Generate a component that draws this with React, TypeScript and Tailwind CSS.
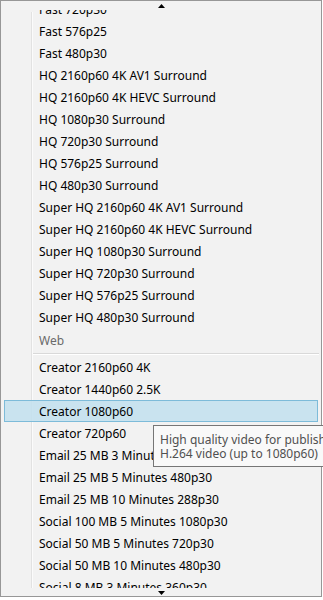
const groupA = [
  'Fast 720p30',
  'Fast 576p25',
  'Fast 480p30',
  'HQ 2160p60 4K AV1 Surround',
  'HQ 2160p60 4K HEVC Surround',
  'HQ 1080p30 Surround',
  'HQ 720p30 Surround',
  'HQ 576p25 Surround',
  'HQ 480p30 Surround',
  'Super HQ 2160p60 4K AV1 Surround',
  'Super HQ 2160p60 4K HEVC Surround',
  'Super HQ 1080p30 Surround',
  'Super HQ 720p30 Surround',
  'Super HQ 576p25 Surround',
  'Super HQ 480p30 Surround',
];

const web = [
  'Creator 2160p60 4K',
  'Creator 1440p60 2.5K',
  'Creator 1080p60',
  'Creator 720p60',
  'Email 25 MB 3 Minutes 1080p30',
  'Email 25 MB 5 Minutes 480p30',
  'Email 25 MB 10 Minutes 288p30',
  'Social 100 MB 5 Minutes 1080p30',
  'Social 50 MB 5 Minutes 720p30',
  'Social 50 MB 10 Minutes 480p30',
  'Social 8 MB 3 Minutes 360p30',
];

function Arrow({ down }: { down?: boolean }) {
  return (
    <svg width="7" height="4" viewBox="0 0 7 4" className="block">
      <polygon points={down ? '0,0 7,0 3.5,4' : '3.5,0 7,4 0,4'} fill="#000" />
    </svg>
  );
}

function Item({ label, active }: { label: string; active?: boolean }) {
  return (
    <div
      className={
        'relative flex h-[22px] items-center whitespace-nowrap border pl-[34px] pt-px text-black ' +
        (active ? 'border-[#7dbbd9] bg-[#c4e1ee]/90' : 'border-transparent')
      }
    >
      {label}
    </div>
  );
}

export default function App() {
  return (
    <div className="relative h-[600px] w-[323px] overflow-hidden bg-white font-['Noto_Sans',sans-serif] text-[12px]">
      <div className="flex h-[597px] w-[322px] flex-col border border-[#979797] bg-[#f2f2f2]">
        <div className="flex h-[9px] justify-center pt-[3px]">
          <Arrow />
        </div>
        <div className="relative h-[578px] overflow-hidden px-[3px]">
          <div className="absolute left-[30px] top-[2px] bottom-0 w-[2px] border-l border-[#e2e2e2] bg-white/70" />
          <div className="-mt-[12px]">
            {groupA.map((l) => (
              <Item key={l} label={l} />
            ))}
            <div className="relative flex h-[24px] items-center pl-[35px] pt-[2px] text-[#6a6a6a]">Web</div>
            <div className="relative my-px ml-[29px] mr-[-1px] h-[2px] border-t border-[#d9d9d9] bg-white" />
            {web.map((l) => (
              <Item key={l} label={l} active={l === 'Creator 1080p60'} />
            ))}
          </div>
        </div>
        <div className="flex flex-1 justify-center pt-[3px]">
          <Arrow down />
        </div>
      </div>

      <div className="absolute left-[153px] top-[425px] w-[360px] border border-[#767676] bg-[#f9f9f9] pb-[5px] pl-[6px] pt-[7px] text-[12px] leading-[14px] text-[#505050]">
        <div className="whitespace-nowrap">High quality video for publishing on the web.</div>
        <div className="whitespace-nowrap">H.264 video (up to 1080p60)</div>
      </div>
    </div>
  );
}
